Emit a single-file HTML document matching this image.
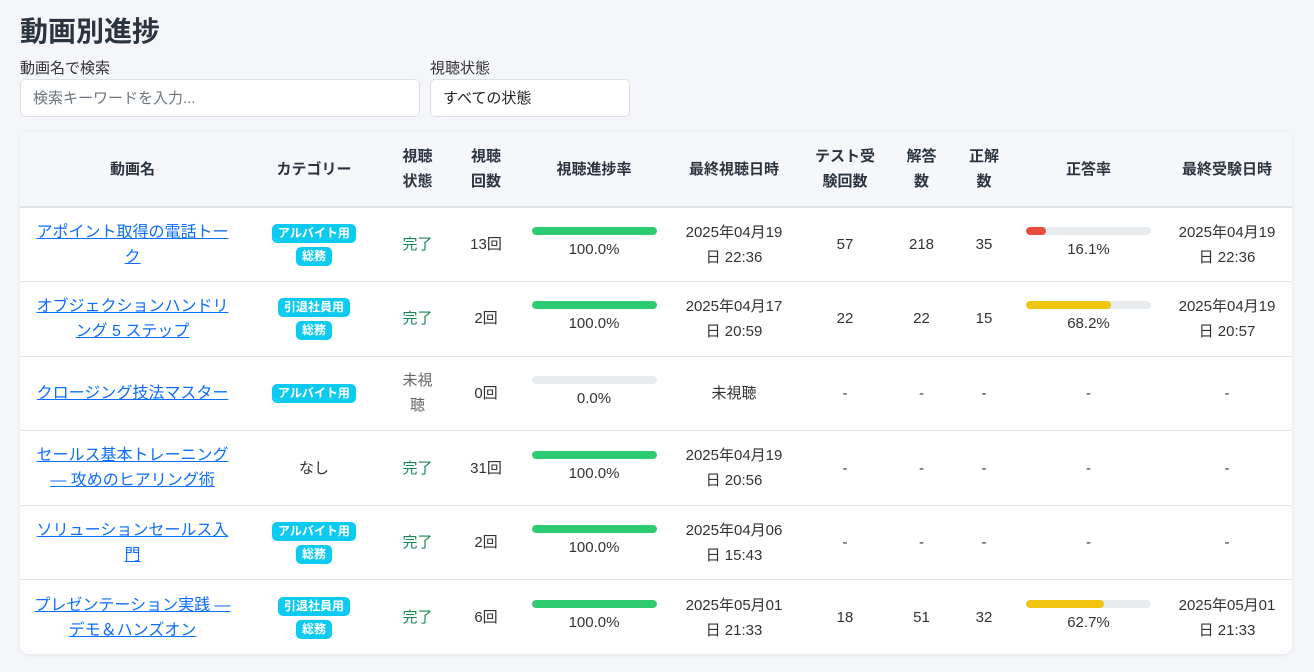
<!DOCTYPE html>
<html><head><meta charset="utf-8"><style>
*{box-sizing:border-box;margin:0;padding:0}
body{width:1314px;height:672px;background:#f4f6f9;font-family:"Liberation Sans","Noto Sans CJK JP",sans-serif;color:#333;overflow:hidden}
h1{position:absolute;left:20px;top:14px;font-size:28px;font-weight:bold;color:#2c3440;line-height:36px}
.lbl{position:absolute;top:57px;font-size:15px;color:#333}
.inp{position:absolute;top:79px;height:38px;background:#fff;border:1px solid #dcdfe4;border-radius:5px;font-size:15px;padding:9px 12px 7px;line-height:20px}
.card{position:absolute;left:20px;top:132px;width:1272px;height:522px;background:#fff;border-radius:8px;box-shadow:0 1px 4px rgba(0,0,0,.08);overflow:hidden}
table{border-collapse:collapse;table-layout:fixed;width:1272px}
th{background:#f5f7fa;height:75px;font-size:15px;font-weight:bold;color:#2c3440;border-bottom:2px solid #dee4ea;line-height:25px;text-align:center}
td{height:74.6px;font-size:15px;text-align:center;border-bottom:1px solid #e4e8ec;line-height:25px;color:#333}
td:first-child{padding:0 13px}
tr:last-child td{border-bottom:none}
a{color:#0d6efd;text-decoration:underline;font-size:16px}
.b{display:inline-block;background:#0dcaf0;color:#fff;font-size:12px;font-weight:bold;border-radius:5px;padding:0 6px;line-height:19px;margin:2px 0}
td.bd{line-height:0}
.g{color:#198754}
.bar{width:125px;height:8px;background:#e9ecef;border-radius:4px;margin:0 auto 2px;overflow:hidden}
.bar i{display:block;height:8px;border-radius:4px}
</style></head><body>
<h1>動画別進捗</h1>
<div class="lbl" style="left:20px">動画名で検索</div>
<div class="lbl" style="left:430px">視聴状態</div>
<div class="inp" style="left:20px;width:400px;color:#6c757d">検索キーワードを入力...</div>
<div class="inp" style="left:430px;width:200px;color:#222">すべての状態</div>
<div class="card"><table>
<colgroup><col style="width:225px"><col style="width:138px"><col style="width:69px"><col style="width:68px"><col style="width:148px"><col style="width:132px"><col style="width:90px"><col style="width:63px"><col style="width:62px"><col style="width:147px"><col style="width:130px"></colgroup>
<tr><th>動画名</th><th>カテゴリー</th><th>視聴<br>状態</th><th>視聴<br>回数</th><th>視聴進捗率</th><th>最終視聴日時</th><th>テスト受<br>験回数</th><th>解答<br>数</th><th>正解<br>数</th><th>正答率</th><th>最終受験日時</th></tr>
<tr><td><a>アポイント取得の電話トーク</a></td><td class="bd"><span class="b">アルバイト用</span><br><span class="b">総務</span></td><td class="g">完了</td><td>13回</td><td><div class="bar"><i style="width:100%;background:#2ecc71"></i></div>100.0%</td><td>2025年04月19<br>日 22:36</td><td>57</td><td>218</td><td>35</td><td><div class="bar"><i style="width:16.1%;background:#e74c3c"></i></div>16.1%</td><td>2025年04月19<br>日 22:36</td></tr>
<tr><td><a>オブジェクションハンドリング 5 ステップ</a></td><td class="bd"><span class="b">引退社員用</span><br><span class="b">総務</span></td><td class="g">完了</td><td>2回</td><td><div class="bar"><i style="width:100%;background:#2ecc71"></i></div>100.0%</td><td>2025年04月17<br>日 20:59</td><td>22</td><td>22</td><td>15</td><td><div class="bar"><i style="width:68.2%;background:#f1c40f"></i></div>68.2%</td><td>2025年04月19<br>日 20:57</td></tr>
<tr><td><a>クロージング技法マスター</a></td><td class="bd"><span class="b">アルバイト用</span></td><td style="color:#666">未視<br>聴</td><td>0回</td><td><div class="bar"></div>0.0%</td><td>未視聴</td><td>-</td><td>-</td><td>-</td><td>-</td><td>-</td></tr>
<tr><td><a>セールス基本トレーニング<br>— 攻めのヒアリング術</a></td><td>なし</td><td class="g">完了</td><td>31回</td><td><div class="bar"><i style="width:100%;background:#2ecc71"></i></div>100.0%</td><td>2025年04月19<br>日 20:56</td><td>-</td><td>-</td><td>-</td><td>-</td><td>-</td></tr>
<tr><td><a>ソリューションセールス入<br>門</a></td><td class="bd"><span class="b">アルバイト用</span><br><span class="b">総務</span></td><td class="g">完了</td><td>2回</td><td><div class="bar"><i style="width:100%;background:#2ecc71"></i></div>100.0%</td><td>2025年04月06<br>日 15:43</td><td>-</td><td>-</td><td>-</td><td>-</td><td>-</td></tr>
<tr><td><a>プレゼンテーション実践 —<br>デモ＆ハンズオン</a></td><td class="bd"><span class="b">引退社員用</span><br><span class="b">総務</span></td><td class="g">完了</td><td>6回</td><td><div class="bar"><i style="width:100%;background:#2ecc71"></i></div>100.0%</td><td>2025年05月01<br>日 21:33</td><td>18</td><td>51</td><td>32</td><td><div class="bar"><i style="width:62.7%;background:#f1c40f"></i></div>62.7%</td><td>2025年05月01<br>日 21:33</td></tr>
</table></div>
</body></html>
